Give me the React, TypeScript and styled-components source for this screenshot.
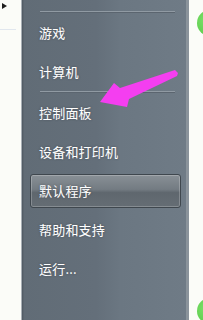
import React from 'react';
import styled, { createGlobalStyle } from 'styled-components';

const GlobalStyle = createGlobalStyle`
  html, body {
    margin: 0;
    padding: 0;
    background: #fbfcf8;
    overflow: hidden;
  }
`;

type Item = { label: string; selected?: boolean };

const topItems: Item[] = [{ label: '游戏' }, { label: '计算机' }];
const bottomItems: Item[] = [
  { label: '控制面板' },
  { label: '设备和打印机' },
  { label: '默认程序', selected: true },
  { label: '帮助和支持' },
  { label: '运行...' },
];

const App: React.FC = () => {
  return (
    <Screen>
      <GlobalStyle />
      <LeftStrip>
        <Triangle />
        <FaintLine />
      </LeftStrip>

      <Panel>
        <Separator />
        {topItems.map((item) => (
          <MenuRow key={item.label}>
            <Label>{item.label}</Label>
          </MenuRow>
        ))}
        <Separator />
        {bottomItems.map((item) =>
          item.selected ? (
            <MenuRow key={item.label}>
              <SelectedBox>
                <Label>{item.label}</Label>
              </SelectedBox>
            </MenuRow>
          ) : (
            <MenuRow key={item.label}>
              <Label>{item.label}</Label>
            </MenuRow>
          )
        )}

        <Arrow viewBox="0 0 90 45" width={90} height={45}>
          <polygon
            points="4,36 18,17 24,22 79,4 82,7 81,10 33,33 31,41"
            fill="#f43ef0"
          />
        </Arrow>
      </Panel>

      <RightStrip>
        <GreenDot $top />
        <GreenDot />
      </RightStrip>
    </Screen>
  );
};

export default App;

const Screen = styled.div`
  display: flex;
  width: 203px;
  height: 320px;
  overflow: hidden;
  font-family: 'Noto Sans CJK SC', 'Noto Sans', sans-serif;
`;

const LeftStrip = styled.div`
  flex: 0 0 21px;
  display: flex;
  flex-direction: column;
`;

const Triangle = styled.div`
  width: 0;
  height: 0;
  margin: 3px 0 0 2px;
  border-left: 5px solid #1e1e1e;
  border-top: 3px solid transparent;
  border-bottom: 3px solid transparent;
`;

const FaintLine = styled.div`
  margin-top: 20px;
  width: 16px;
  height: 1px;
  background: #e1e7ee;
`;

const Panel = styled.div`
  position: relative;
  flex: 0 0 168px;
  box-sizing: border-box;
  height: 320px;
  padding-top: 11px;
  display: flex;
  flex-direction: column;
  border-left: 1px solid #a9b0b6;
  border-right: 3px solid #8a939b;
  box-shadow: inset 1px 0 #535d66, inset 2px 0 #5c6670;
  background: linear-gradient(
    90deg,
    #616c76 0%,
    #646f7a 45%,
    #6b7782 60%,
    #6f7b86 100%
  );
`;

const Separator = styled.div`
  margin-left: 18px;
  width: 135px;
  height: 1px;
  background: #909aa3;
  border-bottom: 1px solid #5b656f;
`;

const MenuRow = styled.div`
  height: 39px;
  display: flex;
  align-items: center;
  padding-left: 17px;
`;

const Label = styled.span`
  font-size: 13px;
  color: #ffffff;
  letter-spacing: 0.2px;
  text-shadow: 0 0 2px rgba(40, 48, 56, 0.8), 0 0 1px rgba(255, 255, 255, 0.4);
  white-space: nowrap;
`;

const SelectedBox = styled.div`
  box-sizing: border-box;
  margin-left: -9px;
  width: 151px;
  height: 34px;
  display: flex;
  align-items: center;
  padding-left: 8px;
  border: 1px solid #3f474e;
  border-radius: 3px;
  background: linear-gradient(
    180deg,
    #899096 0%,
    #737b82 45%,
    #5f676e 55%,
    #656d74 100%
  );
  box-shadow: inset 0 0 0 1px rgba(255, 255, 255, 0.22);
`;

const Arrow = styled.svg`
  position: absolute;
  left: 74px;
  top: 66px;
  pointer-events: none;
`;

const RightStrip = styled.div`
  flex: 1;
  display: flex;
  flex-direction: column;
  justify-content: space-between;
  overflow: hidden;
`;

const GreenDot = styled.div<{ $top?: boolean }>`
  flex: 0 0 26px;
  width: 26px;
  margin-left: 8px;
  margin-top: ${(p) => (p.$top ? '10px' : '0')};
  margin-bottom: ${(p) => (p.$top ? '0' : '-4px')};
  border-radius: 50%;
  background: radial-gradient(circle at 35% 40%, #7be06a, #4fc43f);
`;
